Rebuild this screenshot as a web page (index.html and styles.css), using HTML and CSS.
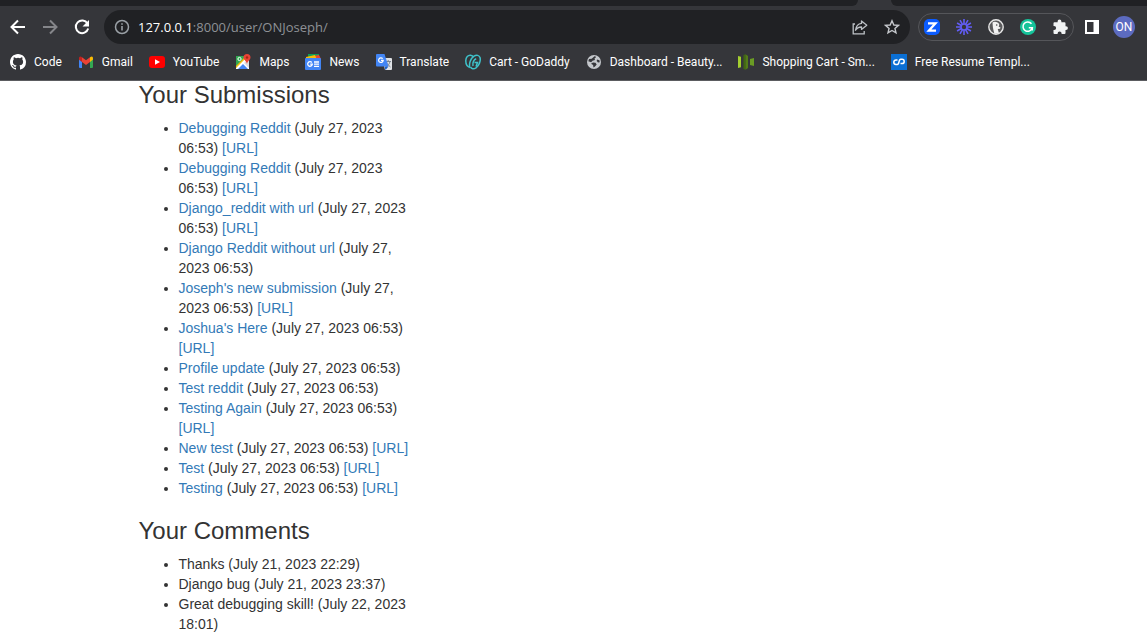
FILE: index.html
```html
<!DOCTYPE html>
<html lang="en">
<head>
<meta charset="utf-8">
<title>ONJoseph</title>
<link rel="stylesheet" href="styles.css">
</head>
<body>
<header class="browser">
  <div class="tabs"><div class="tabs-left"></div><div class="tabs-right"></div></div>
  <div class="toolbar">
    <div class="nav">
      <button class="icon-btn" aria-label="Back"><svg width="16" height="16" viewBox="0 0 16 16" fill="none" stroke="#fff" stroke-width="2"><path d="M15 8H2M8 1.500L1.500 8L8 14.500"/></svg></button>
      <button class="icon-btn" aria-label="Forward"><svg width="16" height="16" viewBox="0 0 16 16" fill="none" stroke="#85868a" stroke-width="2"><path d="M1 8h13M8 1.500L14.500 8L8 14.500"/></svg></button>
      <button class="icon-btn" aria-label="Reload"><svg width="16" height="16" viewBox="0 0 16 16"><path d="M13.500 4.500A6.300 6.300 0 1 0 14.200 9.500" fill="none" stroke="#fff" stroke-width="2"/><path d="M15 1v6.500H8.500z" fill="#fff"/></svg></button>
    </div>
    <div class="address">
      <svg width="16" height="16" viewBox="0 0 16 16"><circle cx="8" cy="8" r="6.500" fill="none" stroke="#9aa0a6" stroke-width="1.500"/><path d="M7.200 7h1.600v4.500H7.200zM7.200 4.200h1.600v1.600H7.200z" fill="#9aa0a6"/></svg>
      <div class="url"><span class="host">127.0.0.1</span>:8000/user/ONJoseph/</div>
      <button class="icon-btn" aria-label="Share"><svg width="16" height="16" viewBox="0 0 16 16" fill="none" stroke="#bdc1c6" stroke-width="1.300"><path d="M3 5H1.200v9.800h11V12"/><path d="M9.500 2l5.300 4.200-5.300 4.200V8C6.500 7.900 4.800 9 3.500 11.300 4 7.500 6 4.800 9.500 4.400z" stroke-linejoin="round"/></svg></button>
      <button class="icon-btn" aria-label="Bookmark this page"><svg width="16" height="16" viewBox="0 0 16 16"><path d="M8 1.800l1.850 4.200 4.550.4-3.450 3 1.050 4.500L8 11.500l-4 2.400 1.050-4.500-3.450-3 4.550-.4z" fill="none" stroke="#c5c8cc" stroke-width="1.400"/></svg></button>
    </div>
    <div class="extensions">
      <button class="icon-btn" aria-label="Zoom"><svg width="16" height="16" viewBox="0 0 16 16"><rect width="16" height="16" rx="5" fill="#0b5cff"/><path d="M4 4.300h7.500L4.800 11.700H12" fill="none" stroke="#fff" stroke-width="2.200"/></svg></button>
      <button class="icon-btn" aria-label="Loom"><svg width="16" height="16" viewBox="0 0 16 16" fill="none" stroke="#625df5"><path d="M8 0v16M0 8h16M4 1.070l8 13.860M12 1.070L4 14.930M1.070 4l13.860 8M1.070 12l13.860-8" stroke-width="1.600"/><circle cx="8" cy="8" r="3.600" fill="#625df5" stroke="none"/><circle cx="8" cy="8" r="2.200" fill="#35363a" stroke="none"/></svg></button>
      <button class="icon-btn" aria-label="DuckDuckGo"><svg width="16" height="16" viewBox="0 0 16 16"><circle cx="8" cy="8" r="7.200" fill="#5a5a5c" stroke="#e6e6e6" stroke-width="1.400"/><path d="M4.500 3.500C6 2.300 10.500 2.600 11.300 5.800l-.6 2 1.800.8-.5 1.200-2.300.2 1.300 4.200-4.500.6C5.500 11.500 4.800 9 4.700 6z" fill="#f2f2f2"/><circle cx="8.700" cy="6" r=".8" fill="#444"/></svg></button>
      <button class="icon-btn" aria-label="Grammarly"><svg width="16" height="16" viewBox="0 0 16 16"><circle cx="8" cy="8" r="8" fill="#15c39a"/><path d="M11.500 4.800A4.700 4.700 0 1 0 12.300 8.800H8.800M12.300 8.500v3" fill="none" stroke="#fff" stroke-width="1.500"/></svg></button>
      <button class="icon-btn" aria-label="Extensions"><svg width="16" height="16" viewBox="0 0 16 16"><path d="M2.500 3.200H5.600V2.500a1.900 1.900 0 0 1 3.800 0v.7h3.100q1 0 1 1v3h.5a1.900 1.900 0 0 1 0 3.800h-.5v3q0 1-1 1H9.600v-.6a2 2 0 0 0-4 0v.6H2.500q-1 0-1-1v-3h.6a2 2 0 0 0 0-4h-.6V4.200q0-1 1-1z" fill="#f1f3f4"/></svg></button>
    </div>
    <button class="icon-btn" aria-label="Side panel"><svg width="14" height="14" viewBox="0 0 14 14"><path fill="#fff" fill-rule="evenodd" d="M0 0h14v14H0zM2 2v10h6.500V2z"/></svg></button>
    <button class="avatar" aria-label="Profile ON">ON</button>
  </div>
  <nav class="bookmarks" aria-label="Bookmarks">
    <a class="bookmark" href="#"><svg width="16" height="16" viewBox="0 0 16 16"><path fill="#fff" d="M8 0C3.580 0 0 3.580 0 8c0 3.540 2.290 6.530 5.470 7.590.4.070.55-.17.55-.38 0-.19-.01-.82-.01-1.490-2.010.37-2.530-.49-2.690-.94-.09-.23-.48-.94-.82-1.130-.28-.15-.68-.52-.01-.53.63-.01 1.080.58 1.230.82.72 1.210 1.870.87 2.330.66.07-.52.28-.87.51-1.070-1.780-.2-3.640-.89-3.640-3.950 0-.87.31-1.590.82-2.150-.08-.2-.36-1.020.08-2.120 0 0 .67-.21 2.200.82a7.600 7.600 0 0 1 4 0c1.530-1.040 2.200-.82 2.200-.82.44 1.100.16 1.920.08 2.120.51.56.82 1.270.82 2.150 0 3.070-1.870 3.750-3.650 3.950.29.25.54.73.54 1.480 0 1.070-.01 1.930-.01 2.200 0 .21.15.46.55.38A8 8 0 0 0 16 8c0-4.420-3.580-8-8-8z"/></svg><span>Code</span></a>
    <a class="bookmark" href="#"><svg width="16" height="16" viewBox="0 0 16 16"><path fill="#4285f4" d="M1 4.500l3 2.300V14H2q-1 0-1-1z"/><path fill="#34a853" d="M12 6.800l3-2.300V13q0 1-1 1h-2z"/><path fill="#fbbc04" d="M12 3.300c2-1.500 3-.6 3 1.300v1l-3 2.500z"/><path fill="#c5221f" d="M1 4.600c0-2 1.300-2.700 3-1.300v4.800L1 5.700z"/><path fill="#ea4335" d="M4 3.300l4 3 4-3v4.800l-4 3-4-3z"/></svg><span>Gmail</span></a>
    <a class="bookmark" href="#"><svg width="16" height="16" viewBox="0 0 16 16"><rect y="2" width="16" height="12" rx="3" fill="#f00"/><path d="M6 5.200v5.600L11 8z" fill="#fff"/></svg><span>YouTube</span></a>
    <a class="bookmark" href="#"><svg width="16" height="16" viewBox="0 0 16 16"><path fill="#34a853" d="M1 2h13v13H1z"/><path fill="#fff" d="M1 13.500L12.500 2H14v13H1z"/><path fill="#4285f4" d="M3 15l5-5 5 5z"/><path fill="#fbbc04" d="M1 12L11 2h2L1 14z"/><path fill="#dadce0" d="M9 9l5-4v9z"/><circle cx="4.500" cy="5" r="1.600" fill="none" stroke="#fff"/><path fill="#ea4335" d="M12 0a3.500 3.500 0 0 1 3.500 3.500C15.500 6 12.500 7 12 10c-.5-3-3.500-4-3.500-6.500A3.500 3.500 0 0 1 12 0z"/><circle cx="12" cy="3.500" r="1.200" fill="#a52714"/></svg><span>Maps</span></a>
    <a class="bookmark" href="#"><svg width="16" height="16" viewBox="0 0 16 16"><path fill="#0f9d58" d="M3 0h11v6H3z"/><path fill="#ea4335" d="M8 2l6-1 2 4H8z"/><path fill="#fbbc04" d="M1 3l9-2 2 5H1z"/><rect y="4" width="16" height="12" rx="1" fill="#4285f4"/><path d="M6.800 8.500A2.300 2.300 0 1 0 7.300 10.200H5.200M9 8h5M9 10.200h5M9 12.400h5" fill="none" stroke="#fff" stroke-width="1.300"/></svg><span>News</span></a>
    <a class="bookmark" href="#"><svg width="16" height="16" viewBox="0 0 16 16"><path fill="#e0e2e5" d="M6 4h9q1 0 1 1v10q0 1-1 1H9z"/><path d="M9.500 7.500h5.500M12.200 6v1.500M14 7.500c-.5 2.500-2 4-3.500 5M10.500 8c.7 2 2 3.500 4 5" fill="none" stroke="#7b858f"/><path fill="#4285f4" d="M1 0h7.500l4 12.500H1q-1 0-1-1V1q0-1 1-1z"/><path fill="#1a5fc8" d="M8.500 12.500h4L9.500 16z"/><path d="M6.700 4.700A2.300 2.300 0 1 0 7.200 6.400H5" fill="none" stroke="#fff" stroke-width="1.200"/></svg><span>Translate</span></a>
    <a class="bookmark" href="#"><svg width="16" height="16" viewBox="0 0 16 16" fill="none" stroke="#3fc1c9" stroke-width="1.500"><path d="M4.800 13.500C1.500 12.300.7 9 .8 6.500.9 3 3 1 5.500 1.200c1.500.2 2.500 1 3 2"/><path d="M4.800 13.500C3.800 9.500 5.500 4.500 9 2.200c2.500-1.600 5.200-1 6 1.300 1 3.500-1 8-4 10.300-2.300 1.600-4.800 1.200-5.300-.8"/><path d="M8 12C7.200 8.500 9 5.500 11.200 4.800M9.500 8.500h3l-1.500 4"/></svg><span>Cart - GoDaddy</span></a>
    <a class="bookmark" href="#"><svg width="16" height="16" viewBox="0 0 16 16"><circle cx="8" cy="8" r="7" fill="#c4c7cb"/><path d="M8.500 2.300c1 0 1.500.4 1.300 1.200L8.500 4.600 9 6 6.500 6.800 5.200 8.200 2.300 7.200 3 5l2.700-.2zM7 8.500l2.500.2 1.200 1.800L9 12.500l-1.500 1-.4-2.500L5 9.800zM11 5.500l2.500.8.200 2-1.700.2-1.300-1.400z" fill="#35363a"/></svg><span>Dashboard - Beauty...</span></a>
    <a class="bookmark" href="#"><svg width="16" height="16" viewBox="0 0 16 16"><path fill="#a4cf30" d="M0 2l3 .7v10.600L0 14z"/><path fill="#41680f" d="M5.500 1l2-.8v15.600l-2-.8z"/><path fill="#527c18" d="M7.500.2L10 2v12l-2.500 1.800z"/><path fill="#6a9c24" d="M12 5l4-1v8l-4-1z"/></svg><span>Shopping Cart - Sm...</span></a>
    <a class="bookmark" href="#"><svg width="16" height="16" viewBox="0 0 16 16"><path fill="#0b6fd3" d="M0 0h16v16H0z"/><path d="M6.500 6H5a2.200 2.200 0 0 0 0 4.400h1.200C8.700 10.400 7.300 5.200 9.800 5.200H11a2.200 2.200 0 0 1 0 4.400H9.500" fill="none" stroke="#fff" stroke-width="1.500"/></svg><span>Free Resume Templ...</span></a>
  </nav>
</header>
<main class="page">
  <div class="column">
    <section>
      <h3 class="heading">Your Submissions</h3>
      <ul class="list">
        <li><a href="#">Debugging Reddit</a> (July 27, 2023 06:53) <a href="#">[URL]</a></li>
        <li><a href="#">Debugging Reddit</a> (July 27, 2023 06:53) <a href="#">[URL]</a></li>
        <li><a href="#">Django_reddit with url</a> (July 27, 2023 06:53) <a href="#">[URL]</a></li>
        <li><a href="#">Django Reddit without url</a> (July 27, 2023 06:53)</li>
        <li><a href="#">Joseph's new submission</a> (July 27, 2023 06:53) <a href="#">[URL]</a></li>
        <li><a href="#">Joshua's Here</a> (July 27, 2023 06:53) <a href="#">[URL]</a></li>
        <li><a href="#">Profile update</a> (July 27, 2023 06:53)</li>
        <li><a href="#">Test reddit</a> (July 27, 2023 06:53)</li>
        <li><a href="#">Testing Again</a> (July 27, 2023 06:53) <a href="#">[URL]</a></li>
        <li><a href="#">New test</a> (July 27, 2023 06:53) <a href="#">[URL]</a></li>
        <li><a href="#">Test</a> (July 27, 2023 06:53) <a href="#">[URL]</a></li>
        <li><a href="#">Testing</a> (July 27, 2023 06:53) <a href="#">[URL]</a></li>
      </ul>
    </section>
    <section>
      <h3 class="heading">Your Comments</h3>
      <ul class="list">
        <li>Thanks (July 21, 2023 22:29)</li>
        <li>Django bug (July 21, 2023 23:37)</li>
        <li>Great debugging skill! (July 22, 2023 18:01)</li>
      </ul>
    </section>
  </div>
</main>
</body>
</html>
```
FILE: styles.css
```css
* { box-sizing: border-box; }

body {
  margin: 0;
  background: #fff;
  color: #333;
  font: 14px/20px "Liberation Sans", Arial, sans-serif;
}

.browser {
  background: #35363a;
  border-bottom: 1px solid #5b5c60;
  padding-bottom: 4px;
  color: #fff;
  font-family: Roboto, "Noto Sans", sans-serif;
}

.tabs {
  display: flex;
  justify-content: space-between;
  height: 6px;
}

.tabs-left,
.tabs-right { background: #202124; }

.tabs-left {
  flex: 1;
  margin-right: 33px;
  border-bottom-right-radius: 6px;
}

.tabs-right {
  width: 256px;
  border-bottom-left-radius: 6px;
}

.toolbar {
  display: flex;
  align-items: center;
  height: 42px;
  padding: 0 12px 0 10px;
}

.toolbar svg,
.bookmark svg { display: block; flex: none; }

.nav {
  display: flex;
  gap: 16px;
  margin-right: 14px;
}

.icon-btn {
  padding: 0;
  border: 0;
  background: none;
}

.address {
  flex: 1;
  display: flex;
  align-items: center;
  gap: 16px;
  height: 34px;
  padding: 0 10px;
  border-radius: 17px;
  background: #202124;
}

.url {
  flex: 1;
  margin-left: -8px;
  color: #8e9196;
  font-family: "Open Sans", "Noto Sans", sans-serif;
  font-size: 13px;
}

.host { color: #fff; }

.extensions {
  display: flex;
  align-items: center;
  gap: 16px;
  height: 28px;
  margin: 0 11px 0 8px;
  padding: 0 5px;
  border: 1px solid #55565a;
  border-radius: 14px;
}

.avatar {
  width: 22px;
  height: 22px;
  margin-left: 14px;
  padding: 0;
  border: 0;
  border-radius: 50%;
  background: #5c6bc0;
  color: #fff;
  font: 12px/22px Roboto, sans-serif;
}

.bookmarks {
  display: flex;
  align-items: center;
  gap: 16px;
  height: 28px;
  padding: 0 10px;
}

.bookmark {
  display: flex;
  align-items: center;
  gap: 8px;
  color: #fff;
  font-size: 12px;
  white-space: nowrap;
  text-decoration: none;
}

.page {
  max-width: 870px;
  margin: 0 auto;
  padding-top: 1px;
}

.column { max-width: 272px; }

.heading {
  margin: 0 0 10px;
  font-size: 24px;
  font-weight: 400;
  line-height: 26px;
}

.list {
  margin: 0;
  padding-left: 40px;
}

section + section { margin-top: 20px; }

.list a {
  color: #337ab7;
  text-decoration: none;
}
```
